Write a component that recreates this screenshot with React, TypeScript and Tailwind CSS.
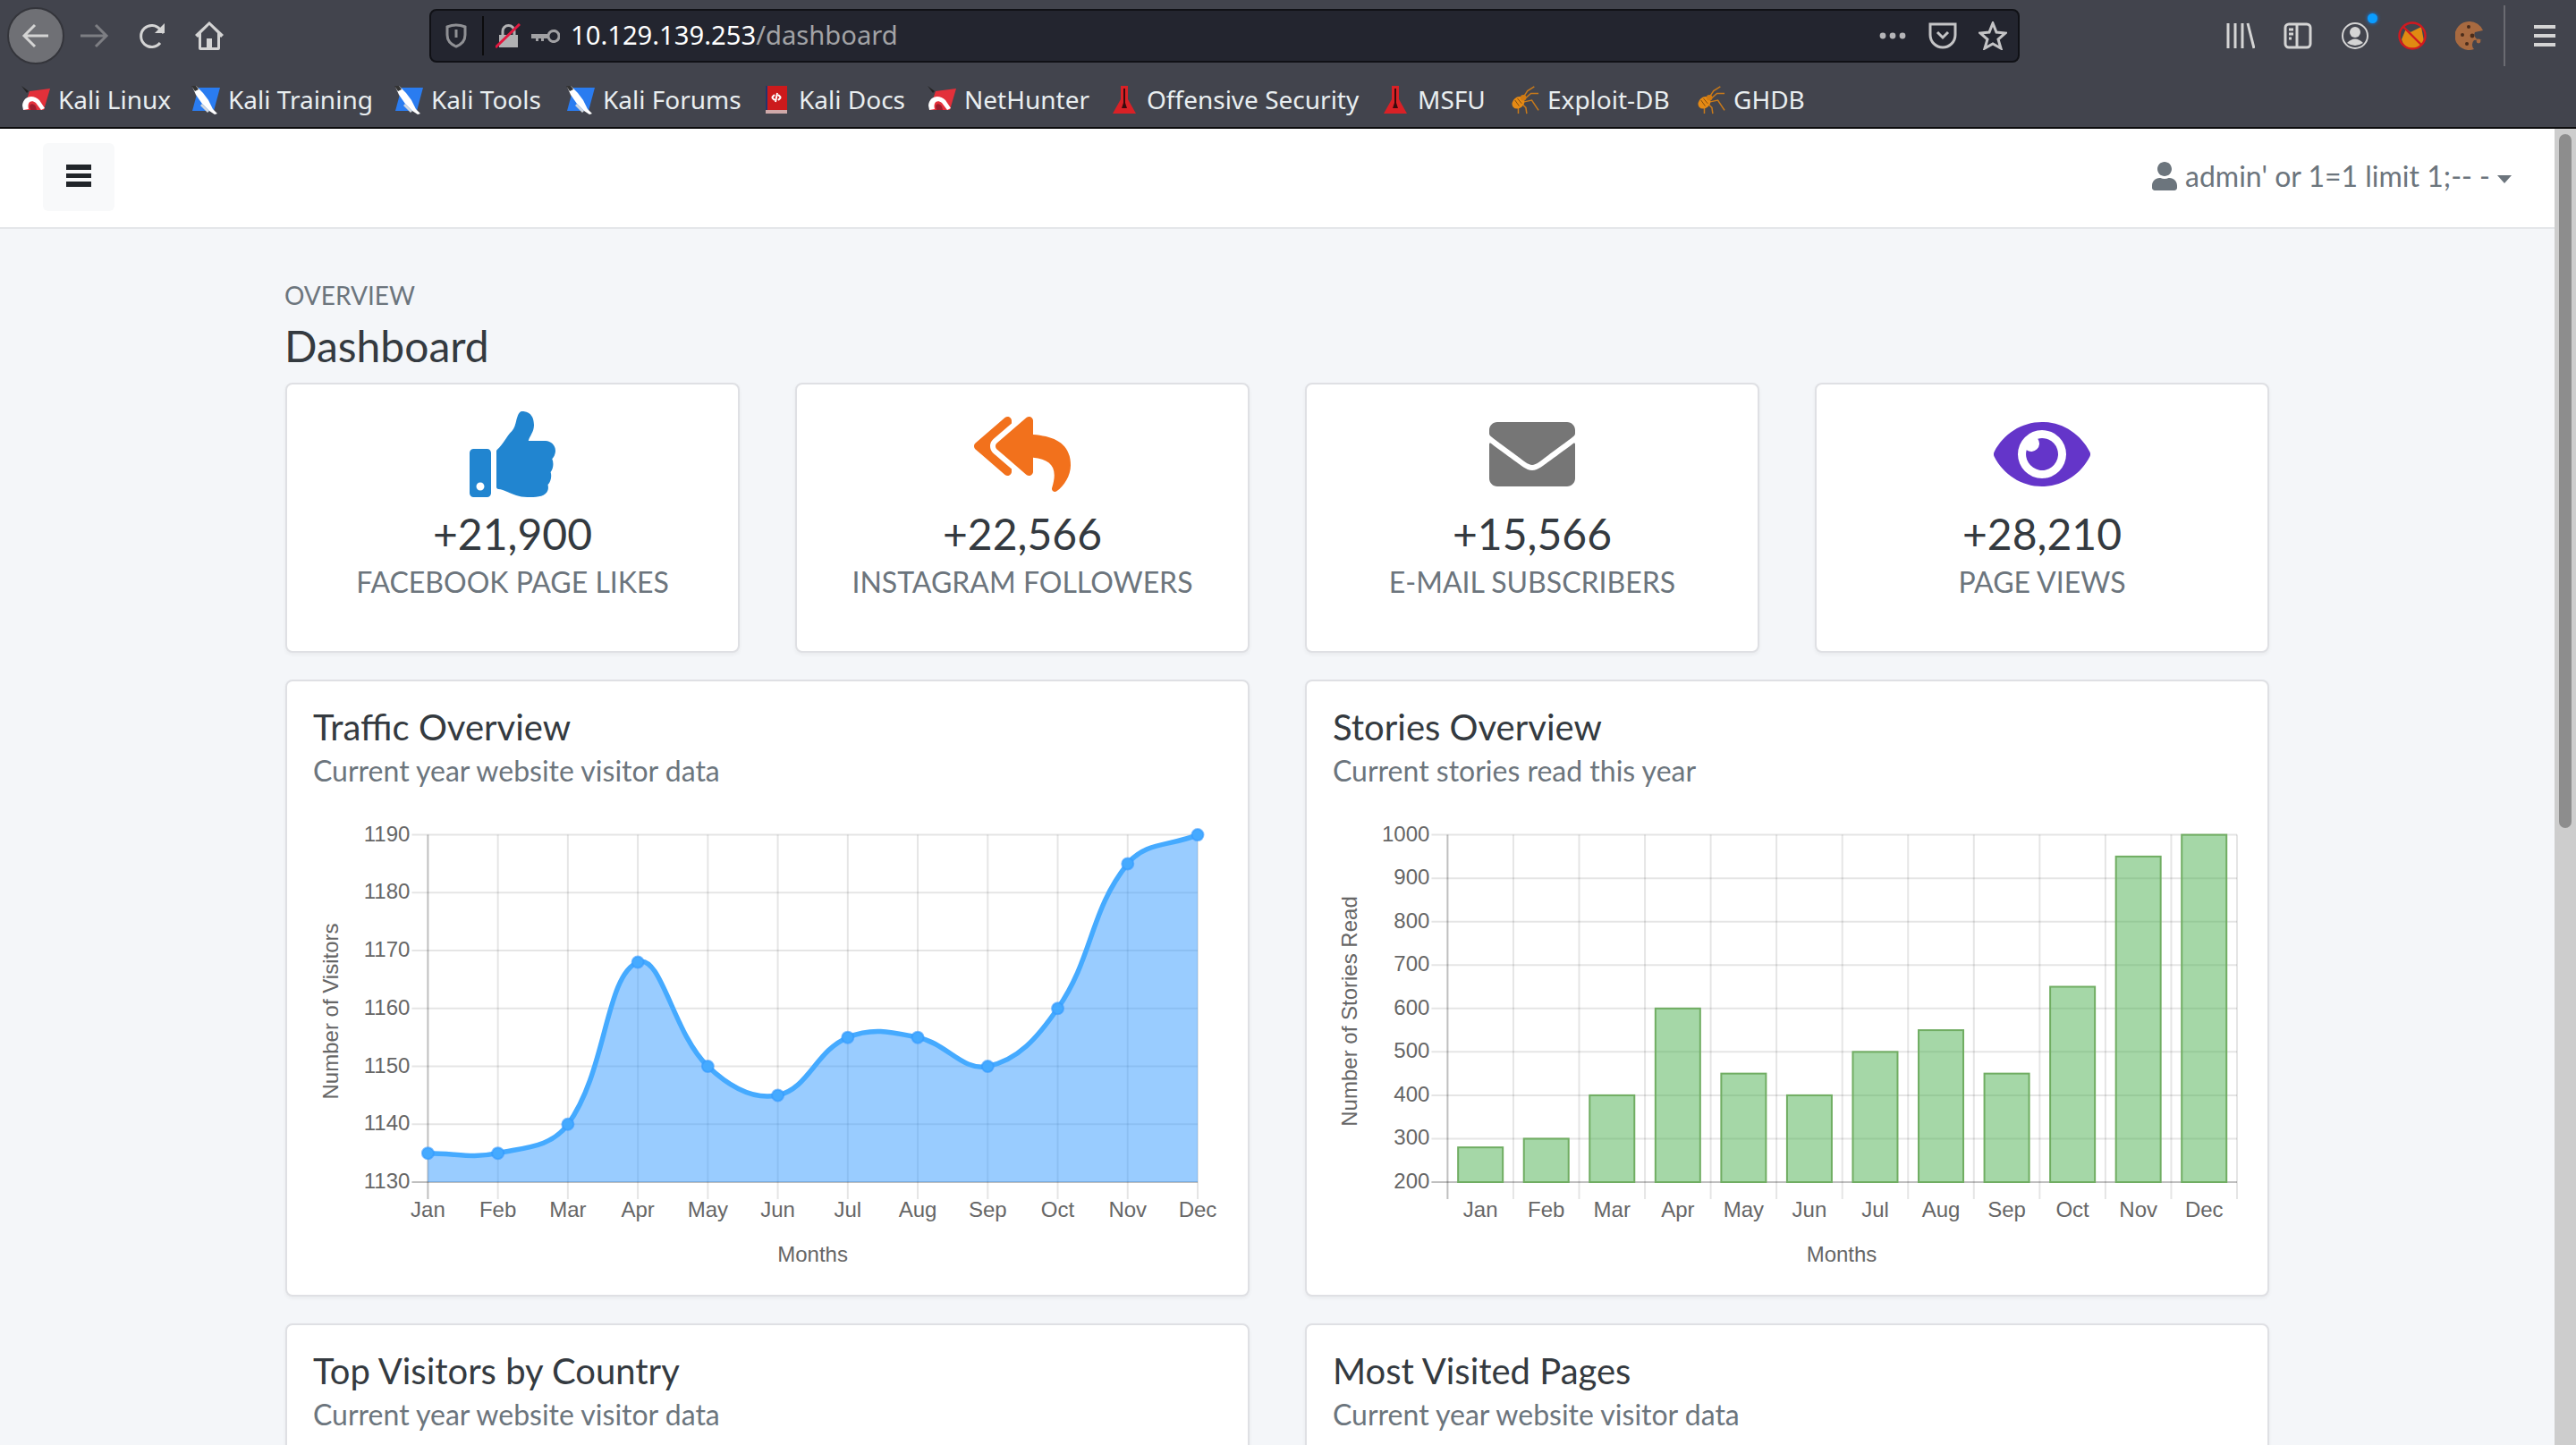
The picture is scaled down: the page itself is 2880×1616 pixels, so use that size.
import { FaThumbsUp, FaReplyAll, FaEnvelope, FaEye, FaUser } from 'react-icons/fa';

const MONTHS = ['Jan', 'Feb', 'Mar', 'Apr', 'May', 'Jun', 'Jul', 'Aug', 'Sep', 'Oct', 'Nov', 'Dec'];
const TOP = 24.6;
const BOTTOM = 413;

function KaliLinuxIcon() {
  return (
    <svg viewBox="0 0 32 32" className="w-8 h-8 shrink-0">
      <path d="M9 6 L32 3 L25 27 L2 27 Z" fill="#e3303a" />
      <path d="M1 22 C2 11 13 9 20 16 L26 25 L22 27 L16 19 C11 15 6 18 8 26 L2 27 Z" fill="#fff" />
      <path d="M9 23 C10 19 14 20 16 23 L17 27 L10 27 Z" fill="#9d1d2d" />
      <path d="M0 0 L8 6 L6 8 Z" fill="#222" />
    </svg>
  );
}

function KaliBlueIcon() {
  return (
    <svg viewBox="0 0 32 32" className="w-8 h-8 shrink-0">
      <path d="M8 2 L32 2 L25 28 L1 28 Z" fill="#2a7cf0" />
      <path d="M1 1 L5 0 L13 8 L19 16 L24 26 L29 31 L26 32 L20 28 L12 20 L5 10 Z" fill="#fff" />
      <path d="M0 0 L5 0 L8 4 L4 6 Z" fill="#333" />
      <path d="M12 20 L20 28 L18 30 L10 22 Z" fill="#cfd6de" />
    </svg>
  );
}

function BookIcon() {
  return (
    <svg viewBox="0 0 26 32" className="w-[26px] h-8 shrink-0">
      <rect x="1" y="0" width="24" height="27" fill="#cc1a1c" />
      <rect x="1" y="0" width="2" height="27" fill="#23346c" />
      <rect x="1" y="27" width="24" height="4" fill="#cfa9a9" />
      <path d="M8 13 L11 10 M8 13 L11 16 M18 13 L15 10 M18 13 L15 16 M14 8 L12 18" stroke="#fff" strokeWidth="2" fill="none" />
    </svg>
  );
}

function FlaskIcon() {
  return (
    <svg viewBox="0 0 28 32" className="w-7 h-8 shrink-0">
      <path d="M10 0 L18 0 L18 15 L27 31 L1 31 L10 15 Z" fill="#d92126" />
      <path d="M13 3 L15 3 L15 19 L17 25 L11 25 L13 19 Z" fill="#3a0a0c" />
    </svg>
  );
}

function SpiderIcon() {
  return (
    <svg viewBox="0 0 34 34" className="w-8 h-8 shrink-0">
      <g stroke="#c97a1a" strokeWidth="1.6" fill="none">
        <path d="M14 15 L20 6 L28 1" />
        <path d="M16 16 L24 9 L33 9" />
        <path d="M16 19 L25 17 L33 29" />
        <path d="M13 21 L18 26 L19 33" />
        <path d="M9 23 L9 33" />
      </g>
      <ellipse cx="9" cy="20" rx="8" ry="6.5" fill="#e68a14" transform="rotate(-40 9 20)" />
      <circle cx="15" cy="14" r="3.5" fill="#d07a12" />
      <path d="M5 17 L10 24 M8 15 L13 21" stroke="#7a4a10" strokeWidth="1" />
    </svg>
  );
}

function Bookmark({ icon, label, width }: { icon: React.ReactNode; label: string; width: string }) {
  return (
    <div className="flex items-center gap-[9px]">
      <div className="w-8 flex justify-center">{icon}</div>
      <span className={`mb-[3px] text-[28px] leading-8 text-[#e9eef0] whitespace-nowrap ${width}`}>{label}</span>
    </div>
  );
}

function BrowserChrome() {
  const gray = '#d4d4d4';
  return (
    <div className="h-[144px] shrink-0 bg-[#42444d] border-b-2 border-[#0c0c0d] font-['Noto_Sans',sans-serif]">
      <div className="h-[87px] flex items-start pt-[8px] pl-2">
        <div className="w-16 h-16 rounded-full bg-[#6f7075] border-2 border-[#34353b] flex items-center justify-center">
          <svg viewBox="0 0 32 32" className="w-8 h-8" fill="none" stroke={gray} strokeWidth="3">
            <path d="M30 16 H3 M15 4 L3 16 L15 28" />
          </svg>
        </div>
        <svg viewBox="0 0 32 32" className="w-8 h-8 ml-[18px] mt-4" fill="none" stroke="#7d7e83" strokeWidth="3">
          <path d="M0 16 H29 M17 4 L29 16 L17 28" />
        </svg>
        <svg viewBox="0 0 32 32" className="w-8 h-8 ml-8 mt-4" fill="none" stroke={gray} strokeWidth="3">
          <path d="M25 24 A12 12 0 1 1 25 9 L29 13" />
          <path d="M30 2 V13 H19 Z" fill={gray} stroke="none" />
        </svg>
        <svg viewBox="0 0 32 32" className="w-8 h-8 ml-8 mt-4" fill={gray}>
          <path fillRule="evenodd" d="M16 0 L32 15 L29 18 L28 17 V30 Q28 32 26 32 H6 Q4 32 4 30 V17 L3 18 L0 15 Z M16 4 L7 13 V29 H13 V19 H19 V29 H25 V13 Z" />
        </svg>
        <div className="ml-[230px] w-[1778px] h-[60px] mt-[2px] rounded-[8px] bg-[#23252f] border-2 border-[#101116] flex items-center relative">
          <svg viewBox="0 0 24 28" className="w-6 h-7 ml-4" fill="none" stroke="#8f9094" strokeWidth="3">
            <path d="M2 4 Q12 0 22 4 V13 Q22 22 12 26 Q2 22 2 13 Z" />
            <path d="M12 7 V16" />
          </svg>
          <div className="w-[2px] h-[44px] bg-[#0c0c0d] ml-[17px]" />
          <svg viewBox="0 0 28 28" className="w-7 h-7 ml-[13px]" fill="#b1b1b3">
            <path d="M4 13 H25 V27 H4 Z" />
            <path d="M8 13 V9 A6.5 6.5 0 0 1 21 9 V13" fill="none" stroke="#b1b1b3" strokeWidth="3" />
            <path d="M0 27 L27 1" stroke="#e2183f" strokeWidth="3" />
          </svg>
          <svg viewBox="0 0 32 16" className="w-8 h-4 ml-3" fill="#a0a0a3">
            <path fillRule="evenodd" d="M0 6 H18 A7.5 7.5 0 1 1 18 11 H14 V14 H11 V11 H8 V14 H5 V11 H0 Z M25 4 A4.5 4.5 0 1 0 25.01 4 Z" />
          </svg>
          <span className="ml-3 text-[29.2px] leading-none text-white">
            10.129.139.253<span className="text-[#a2a3a6]">/dashboard</span>
          </span>
          <div className="ml-auto flex items-center gap-[24px] pr-[12px]">
            <svg viewBox="0 0 32 8" className="w-8 h-2" fill="#b5b5b8">
              <circle cx="5" cy="4" r="3.4" />
              <circle cx="16" cy="4" r="3.4" />
              <circle cx="27" cy="4" r="3.4" />
            </svg>
            <svg viewBox="0 0 32 32" className="w-8 h-8" fill="none" stroke="#c4c4c6" strokeWidth="3">
              <path d="M2 3 H30 V15 A14 14 0 0 1 2 15 Z" />
              <path d="M10 12 L16 18 L22 12" />
            </svg>
            <svg viewBox="0 0 32 32" className="w-8 h-8" fill="none" stroke="#c4c4c6" strokeWidth="3">
              <path d="M16 2 L20 12 L30 13 L22 20 L25 30 L16 25 L7 30 L10 20 L2 13 L12 12 Z" />
            </svg>
          </div>
        </div>
        <div className="ml-[231px] flex items-center h-8 mt-4 gap-[32px] relative">
          <svg viewBox="0 0 32 32" className="w-8 h-8" fill="none" stroke={gray} strokeWidth="3">
            <path d="M2 2 V30 M10 2 V30 M18 2 V30 M24 2 L31 30" />
          </svg>
          <svg viewBox="0 0 32 32" className="w-8 h-8" fill="none" stroke={gray} strokeWidth="3">
            <rect x="2" y="3" width="28" height="26" rx="4" />
            <path d="M15 3 V29 M6 9 H11 M6 14 H11 M6 19 H9" />
          </svg>
          <div className="relative w-8 h-8">
            <svg viewBox="0 0 32 32" className="w-8 h-8" fill={gray}>
              <circle cx="16" cy="16" r="14" fill="none" stroke={gray} strokeWidth="2" />
              <circle cx="16" cy="12" r="6" />
              <path d="M7 24 Q16 15 25 24 Q16 30 7 24 Z" />
            </svg>
            <div className="absolute -top-[9px] -right-[9px] w-[11px] h-[11px] rounded-full bg-[#0a9dff] shadow-[0_0_4px_#0a84ff]" />
          </div>
          <svg viewBox="0 0 32 32" className="w-8 h-8">
            <path d="M4 20 L9 8 L14 12 L22 8 L26 6 L29 22 Q24 31 15 30 Q6 29 4 20 Z" fill="#e08a12" />
            <circle cx="16" cy="16" r="14.5" fill="none" stroke="#d01920" strokeWidth="2.4" />
            <path d="M6 6 L26 26" stroke="#d01920" strokeWidth="2.4" />
          </svg>
          <svg viewBox="0 0 32 32" className="w-8 h-8">
            <path d="M16 0 A16 16 0 1 0 21 31 A7 7 0 0 1 21 21 L30 20 A6 6 0 0 1 22 12 L31 10 A16 16 0 0 0 16 0 Z" fill="#a86a40" />
            <circle cx="8" cy="15" r="2" fill="#4a2c1a" />
            <circle cx="15" cy="6" r="2" fill="#4a2c1a" />
            <circle cx="13" cy="25" r="2" fill="#4a2c1a" />
            <circle cx="19" cy="16" r="2.4" fill="#4a2c1a" />
            <circle cx="26" cy="22" r="2.4" fill="#a86a40" />
          </svg>
          <div className="w-[2px] h-[68px] bg-[#6a6b71] -ml-[10px]" />
          <svg viewBox="0 0 24 24" className="w-6 h-6" fill={gray}>
            <rect y="0" width="24" height="4" />
            <rect y="10" width="24" height="4" />
            <rect y="20" width="24" height="4" />
          </svg>
        </div>
      </div>
      <div className="h-[55px] flex items-center gap-[23px] pl-6 pb-[5px]">
        <Bookmark icon={<KaliLinuxIcon />} label="Kali Linux" width="w-[126px]" />
        <Bookmark icon={<KaliBlueIcon />} label="Kali Training" width="w-[163px]" />
        <Bookmark icon={<KaliBlueIcon />} label="Kali Tools" width="w-[128px]" />
        <Bookmark icon={<KaliBlueIcon />} label="Kali Forums" width="w-[155px]" />
        <Bookmark icon={<BookIcon />} label="Kali Docs" width="w-[121px]" />
        <Bookmark icon={<KaliLinuxIcon />} label="NetHunter" width="w-[140px]" />
        <Bookmark icon={<FlaskIcon />} label="Offensive Security" width="w-[239px]" />
        <Bookmark icon={<FlaskIcon />} label="MSFU" width="w-[81px]" />
        <Bookmark icon={<SpiderIcon />} label="Exploit-DB" width="w-[144px]" />
        <Bookmark icon={<SpiderIcon />} label="GHDB" width="w-[82px]" />
      </div>
    </div>
  );
}

function Navbar() {
  return (
    <div className="h-[112px] shrink-0 bg-white border-b-2 border-[#e4e6e9] flex items-center justify-between pl-12 pr-[48px]">
      <div className="w-20 h-[76px] mb-[2px] pb-[3px] rounded-md bg-[#f8f9fa] flex flex-col items-center justify-center gap-[4px]">
        <div className="w-7 h-[6px] bg-[#212529]" />
        <div className="w-7 h-[5px] bg-[#212529]" />
        <div className="w-7 h-[6px] bg-[#212529]" />
      </div>
      <div className="mb-1 flex items-center text-[#6c757d] text-[32px]">
        <FaUser className="w-7 h-8 mr-[9px]" />
        <span className="whitespace-pre">admin' or 1=1 limit 1;-- -</span>
        <div className="ml-2 mt-[6px] w-0 h-0 border-x-[8px] border-x-transparent border-t-[9px] border-t-[#6c757d]" />
      </div>
    </div>
  );
}

function StatCard({ icon, value, label }: { icon: React.ReactNode; value: string; label: string }) {
  return (
    <div className="bg-white border-2 border-[#dfe0e4] rounded-lg shadow-[0_2px_4px_rgba(0,0,0,0.05)] h-[302px] flex flex-col items-center pt-[30px]">
      <div className="h-24 flex items-center justify-center">{icon}</div>
      <div className="mt-[12px] text-[48px] leading-[58px] text-[#343a40]">{value}</div>
      <div className="mt-[6px] text-[32px] leading-[38px] text-[#6c757d]">{label}</div>
    </div>
  );
}

function splinePath(pts: [number, number][]) {
  const t = 0.4;
  const ctrl = pts.map((p, i) => {
    const prev = pts[Math.max(i - 1, 0)];
    const next = pts[Math.min(i + 1, pts.length - 1)];
    const d01 = Math.hypot(p[0] - prev[0], p[1] - prev[1]);
    const d12 = Math.hypot(next[0] - p[0], next[1] - p[1]);
    const sum = d01 + d12 || 1;
    const fa = (t * d01) / sum;
    const fb = (t * d12) / sum;
    const clamp = (y: number) => Math.max(TOP, Math.min(BOTTOM, y));
    return {
      px: p[0] - fa * (next[0] - prev[0]),
      py: clamp(p[1] - fa * (next[1] - prev[1])),
      nx: p[0] + fb * (next[0] - prev[0]),
      ny: clamp(p[1] + fb * (next[1] - prev[1])),
    };
  });
  let d = `M${pts[0][0]} ${pts[0][1]}`;
  for (let i = 1; i < pts.length; i++) {
    d += ` C${ctrl[i - 1].nx} ${ctrl[i - 1].ny} ${ctrl[i].px} ${ctrl[i].py} ${pts[i][0]} ${pts[i][1]}`;
  }
  return d;
}

function HGrid({ ticks, left, right, y }: { ticks: number[]; left: number; right: number; y: (v: number) => number }) {
  return (
    <>
      {ticks.map((v, i) => (
        <g key={v}>
          <line x1={left - 18} x2={right} y1={y(v)} y2={y(v)} stroke={i === 0 ? 'rgba(0,0,0,0.25)' : 'rgba(0,0,0,0.1)'} strokeWidth="2" />
          <text x={left - 20} y={y(v) + 7} textAnchor="end" fontSize="24" fill="#666">{v}</text>
        </g>
      ))}
    </>
  );
}

function TrafficChart() {
  const left = 126.4;
  const right = 987;
  const values = [1135, 1135, 1140, 1168, 1150, 1145, 1155, 1155, 1150, 1160, 1185, 1190];
  const y = (v: number) => BOTTOM - ((v - 1130) / 60) * (BOTTOM - TOP);
  const x = (i: number) => left + (i * (right - left)) / 11;
  const pts = values.map((v, i) => [x(i), y(v)] as [number, number]);
  const line = splinePath(pts);
  return (
    <svg width="1012" height="510" className="mt-[26px] ml-[2px] font-['Liberation_Sans',sans-serif]">
      {MONTHS.map((m, i) => (
        <g key={m}>
          <line x1={x(i)} x2={x(i)} y1={TOP} y2={BOTTOM + 19} stroke={i === 0 ? 'rgba(0,0,0,0.25)' : 'rgba(0,0,0,0.1)'} strokeWidth="2" />
          <text x={x(i)} y={452} textAnchor="middle" fontSize="24" fill="#666">{m}</text>
        </g>
      ))}
      <HGrid ticks={[1130, 1140, 1150, 1160, 1170, 1180, 1190]} left={left} right={right} y={y} />
      <path d={`${line} L${right} ${BOTTOM} L${left} ${BOTTOM} Z`} fill="rgba(51,153,255,0.5)" />
      <path d={line} fill="none" stroke="#45aaff" strokeWidth="5.5" />
      {pts.map((p, i) => (
        <circle key={i} cx={p[0]} cy={p[1]} r="6.5" fill="#45aaff" stroke="rgba(51,153,255,0.6)" strokeWidth="2" />
      ))}
      <text x={556.6} y={502} textAnchor="middle" fontSize="24" fill="#666">Months</text>
      <text transform="translate(26 222) rotate(-90)" textAnchor="middle" fontSize="24" fill="#666">Number of Visitors</text>
    </svg>
  );
}

function StoriesChart() {
  const left = 127.4;
  const right = 1010;
  const values = [280, 300, 400, 600, 450, 400, 500, 550, 450, 650, 950, 1000];
  const y = (v: number) => BOTTOM - ((v - 200) / 800) * (BOTTOM - TOP);
  const step = (right - left) / 12;
  return (
    <svg width="1012" height="510" className="mt-[26px] ml-[1px] font-['Liberation_Sans',sans-serif]">
      {Array.from({ length: 13 }, (_, i) => (
        <line key={i} x1={left + i * step} x2={left + i * step} y1={TOP} y2={BOTTOM + 19} stroke={i === 0 ? 'rgba(0,0,0,0.25)' : 'rgba(0,0,0,0.1)'} strokeWidth="2" />
      ))}
      <HGrid ticks={[200, 300, 400, 500, 600, 700, 800, 900, 1000]} left={left} right={right} y={y} />
      {values.map((v, i) => (
        <rect
          key={i}
          x={left + i * step + (step - 50) / 2}
          y={y(v)}
          width="50"
          height={BOTTOM - y(v)}
          fill="rgba(76,175,80,0.5)"
          stroke="#70ad62"
          strokeWidth="2"
        />
      ))}
      {MONTHS.map((m, i) => (
        <text key={m} x={left + (i + 0.5) * step} y={452} textAnchor="middle" fontSize="24" fill="#666">{m}</text>
      ))}
      <text x={568} y={502} textAnchor="middle" fontSize="24" fill="#666">Months</text>
      <text transform="translate(26 222) rotate(-90)" textAnchor="middle" fontSize="24" fill="#666">Number of Stories Read</text>
    </svg>
  );
}

function ChartCard({ title, subtitle, children }: { title: string; subtitle: string; children?: React.ReactNode }) {
  return (
    <div className="bg-white border-2 border-[#dfe0e4] rounded-lg shadow-[0_2px_4px_rgba(0,0,0,0.05)] h-[690px] px-[29px] pt-[27px]">
      <div className="text-[40px] leading-[48px] text-[#343a40]">{title}</div>
      <div className="mt-1 text-[32px] leading-[42px] text-[#6c757d]">{subtitle}</div>
      {children}
    </div>
  );
}

export default function App() {
  return (
    <div className="w-[2880px] h-[1616px] overflow-hidden flex flex-col font-['Lato',sans-serif]">
      <BrowserChrome />
      <div className="flex-1 flex min-h-0">
        <div className="flex-1 flex flex-col min-w-0 bg-[#f4f6f9]">
          <Navbar />
          <div className="w-[2218px] mx-auto">
            <div className="mt-[57px] -ml-[1px] text-[28px] leading-[34px] text-[#6c757d]">OVERVIEW</div>
            <div className="mt-[8px] -ml-[1px] text-[48px] leading-[64px] text-[#343a40]">Dashboard</div>
            <div className="mt-[9px] grid grid-cols-4 gap-x-[62px]">
              <StatCard icon={<FaThumbsUp className="w-24 h-24 text-[#2185d0]" />} value="+21,900" label="FACEBOOK PAGE LIKES" />
              <StatCard icon={<FaReplyAll className="w-[108px] h-24 text-[#f2711c]" />} value="+22,566" label="INSTAGRAM FOLLOWERS" />
              <StatCard icon={<FaEnvelope className="w-24 h-24 text-[#767676]" />} value="+15,566" label="E-MAIL SUBSCRIBERS" />
              <StatCard icon={<FaEye className="w-[108px] h-24 text-[#6435c9]" />} value="+28,210" label="PAGE VIEWS" />
            </div>
            <div className="mt-[30px] grid grid-cols-2 gap-x-[62px] gap-y-[30px]">
              <ChartCard title="Traffic Overview" subtitle="Current year website visitor data"><TrafficChart /></ChartCard>
              <ChartCard title="Stories Overview" subtitle="Current stories read this year"><StoriesChart /></ChartCard>
              <ChartCard title="Top Visitors by Country" subtitle="Current year website visitor data" />
              <ChartCard title="Most Visited Pages" subtitle="Current year website visitor data" />
            </div>
          </div>
        </div>
        <div className="w-6 shrink-0 bg-[#cdcdcd] flex justify-center pt-[6px]">
          <div className="w-[14px] h-[776px] rounded-full bg-[#8d8d8d]" />
        </div>
      </div>
    </div>
  );
}
